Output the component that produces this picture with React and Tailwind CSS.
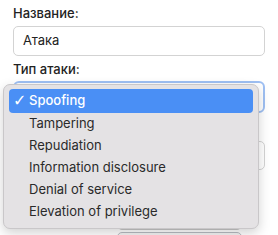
import React from 'react';

const options = ['Spoofing', 'Tampering', 'Repudiation', 'Information disclosure', 'Denial of service', 'Elevation of privilege'];

export default function App() {
  return (
    <div className="relative w-[278px] h-[235px] overflow-hidden bg-white text-[13px] text-[#222]" style={{ fontFamily: 'Inter, "Noto Sans", sans-serif' }}>
      <div className="flex flex-col pl-[13px] pr-[13px] pt-[5px]">
        <label className="h-[16px] leading-[16px] font-medium">Название:</label>
        <div className="mt-[5px] h-[30px] rounded-[5px] border border-[#d3d3d3] px-[9px] flex items-center">Атака</div>
        <label className="mt-[5px] h-[16px] leading-[16px] font-medium">Тип атаки:</label>
        <div className="mt-[4px] h-[32px] rounded-[6px] border-2 border-[#9fc0f3] bg-white" />
        <div className="mt-[6px] h-[16px]" />
        <div className="mt-[6px] h-[29px] rounded-[5px] border border-[#d3d3d3]" />
        <div className="mt-[6px] ml-[104px] mr-[23px] h-[54px] rounded-[5px] border border-[#c8c8c8]" />
        <div className="mt-[2px] ml-[104px] mr-[23px] h-[20px] rounded-[5px] border border-[#b8bcc2] bg-[#f3f3f3]" />
      </div>

      <ul className="absolute left-[3px] top-[84px] w-[256px] rounded-[7px] border border-[#c9c7c9] bg-[#e4e2e4] pt-[4px] pb-[5px] px-[5px] shadow-[0_4px_12px_rgba(0,0,0,0.18)]">
        {options.map((o, i) => (
          <li key={o} className={`flex items-center rounded-[4px] ${i === 0 ? 'bg-[#4a8ff5] text-white h-[24px] font-medium' : 'h-[22px] text-[#2a2a2a]'}`}>
            <span className="w-[20px] pl-[4px] text-[16px] font-normal leading-none" style={{ fontFamily: '"DejaVu Sans", sans-serif' }}>{i === 0 ? '✓' : ''}</span>
            <span>{o}</span>
          </li>
        ))}
      </ul>
    </div>
  );
}
